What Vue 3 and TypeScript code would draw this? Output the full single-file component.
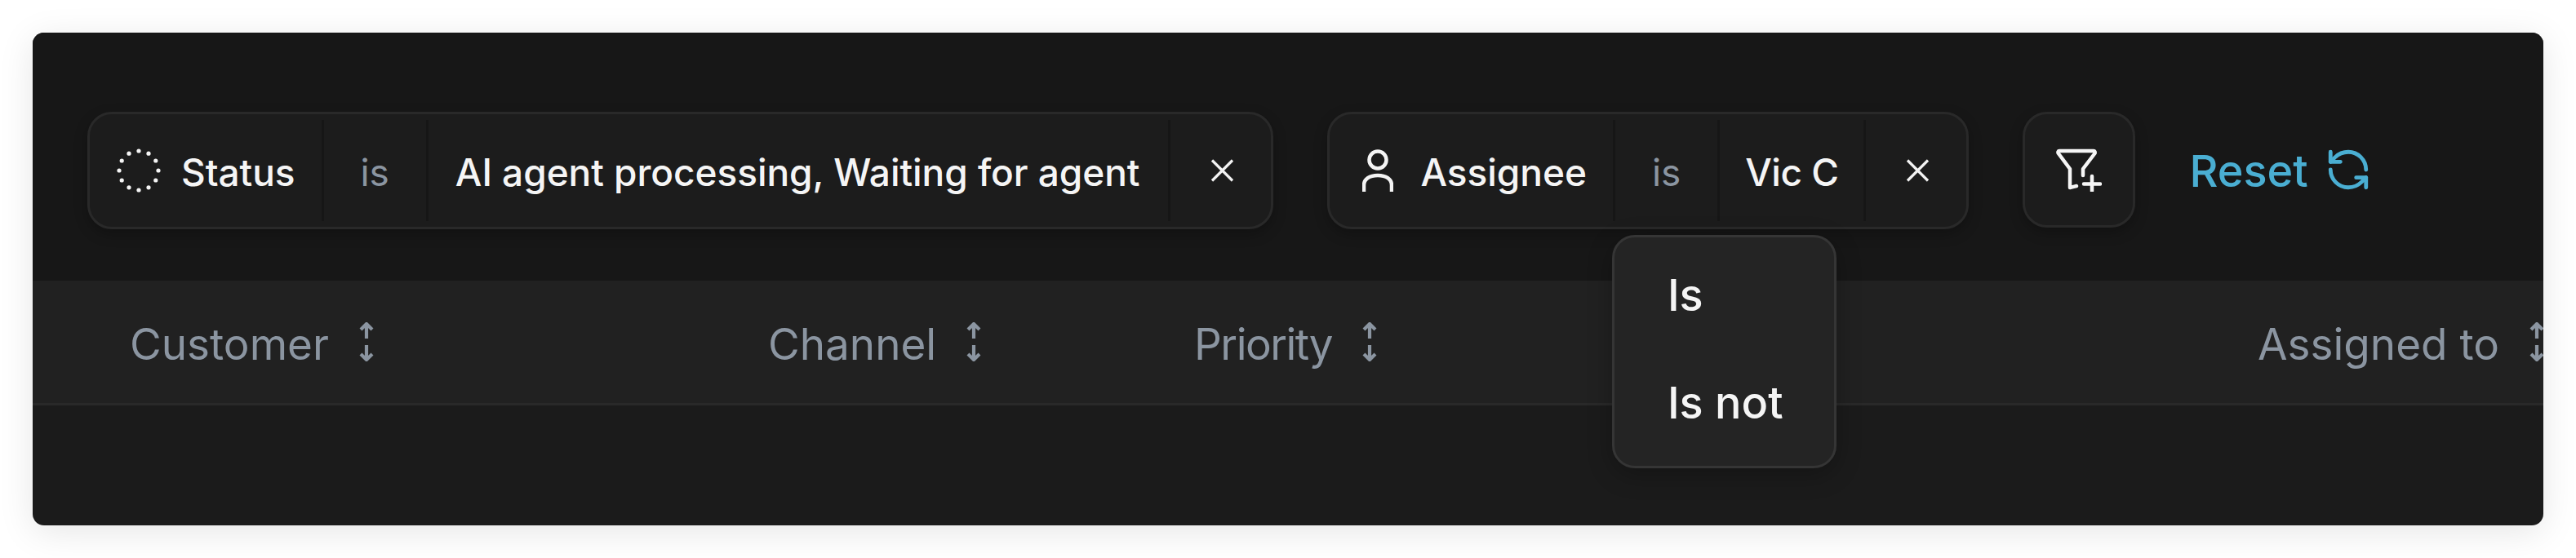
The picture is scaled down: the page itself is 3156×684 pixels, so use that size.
<script setup lang="ts">
const dots = Array.from({ length: 12 }, (_, i) => {
  const a = (i * Math.PI) / 6
  return { cx: 27 + 24 * Math.cos(a), cy: 27 + 24 * Math.sin(a) }
})
const columns = [
  { label: 'Customer', width: 782, tight: false },
  { label: 'Channel', width: 522, tight: false },
  { label: 'Priority', width: 1303, tight: true },
  { label: 'Assigned to', width: 400, tight: false },
]
</script>

<template>
  <div class="page">
    <div class="window">
      <div class="filters">
        <div class="chip">
          <div class="seg field status">
            <svg width="54" height="54" viewBox="0 0 54 54">
              <circle v-for="(d, i) in dots" :key="i" :cx="d.cx" :cy="d.cy" r="2.6" fill="#f4f4f4" />
            </svg>
            <span>Status</span>
          </div>
          <div class="seg op">is</div>
          <div class="seg value">AI agent processing, Waiting for agent</div>
          <div class="seg close">
            <svg width="29" height="28" viewBox="0 0 29 28"><path d="M2 1.5 27 26.5M27 1.5 2 26.5" stroke="#f2f2f2" stroke-width="3.2" fill="none" /></svg>
          </div>
        </div>

        <div class="chip">
          <div class="seg field assignee">
            <svg width="38" height="52" viewBox="0 0 38 52" fill="none" stroke="#f4f4f4" stroke-width="4.500">
              <circle cx="19" cy="13" r="10.500" />
              <path d="M2 52V44C2 36.500 9 32 19 32S36 36.500 36 44V52" />
            </svg>
            <span>Assignee</span>
          </div>
          <div class="seg op anchor">
            is
            <div class="menu">
              <div class="item">Is</div>
              <div class="item">Is not</div>
            </div>
          </div>
          <div class="seg value short">Vic C</div>
          <div class="seg close">
            <svg width="29" height="28" viewBox="0 0 29 28"><path d="M2 1.5 27 26.5M27 1.5 2 26.5" stroke="#f2f2f2" stroke-width="3.2" fill="none" /></svg>
          </div>
        </div>

        <button class="add">
          <svg width="56" height="53" viewBox="0 0 56 53" fill="none" stroke="#f6f6f6" stroke-width="4.500" stroke-linejoin="round" stroke-linecap="round">
            <path d="M4 3H46C47.500 3 48 4.500 47.500 6L33 25V33M4 3C2.500 3 2 4.500 2.800 6L17 25V48L25 46" />
            <path d="M34 43.500H54M44 34V52" />
          </svg>
        </button>

        <button class="reset">
          <span>Reset</span>
          <svg width="58" height="58" viewBox="0 0 24 24" fill="none" stroke="#4aaed2" stroke-width="2" stroke-linecap="round" stroke-linejoin="round">
            <path d="M21 12a9 9 0 0 0-9-9 9.750 9.750 0 0 0-6.740 2.740L3 8" />
            <path d="M3 3v5h5" />
            <path d="M3 12a9 9 0 0 0 9 9 9.750 9.750 0 0 0 6.740-2.740L21 16" />
            <path d="M16 16h5v5" />
          </svg>
        </button>
      </div>

      <div class="thead">
        <div v-for="c in columns" :key="c.label" class="th" :style="{ width: c.width + 'px' }">
          <span class="label" :class="{ tight: c.tight }">{{ c.label }}</span>
          <svg width="20" height="48" viewBox="0 0 20 48" fill="none" stroke="#8b95a1" stroke-width="4.200">
            <path d="M10 2V20M3 9 10 2 17 9" />
            <path d="M10 28V46M3 39 10 46 17 39" />
          </svg>
        </div>
      </div>
    </div>
  </div>
</template>

<style scoped>
.page {
  padding: 40px;
  width: 3156px;
  height: 684px;
  box-sizing: border-box;
  background: #ffffff;
  font-family: Inter, "Liberation Sans", sans-serif;
}
.window {
  width: 3076px;
  height: 604px;
  border-radius: 14px;
  background: #1b1b1b;
  overflow: hidden;
  box-shadow: 0 8px 44px rgba(0, 0, 0, 0.1);
}
.filters {
  height: 304px;
  box-sizing: border-box;
  background: #171717;
  padding: 97px 0 0 67px;
  display: flex;
  align-items: flex-start;
  gap: 66px;
}
.chip {
  height: 144px;
  box-sizing: border-box;
  background: #1c1c1c;
  border: 3px solid #292929;
  border-radius: 30px;
  padding: 7px 0;
  display: flex;
  box-shadow: 0 6px 16px rgba(0, 0, 0, 0.25);
}
.seg {
  display: flex;
  align-items: center;
  font-size: 46px;
  font-weight: 500;
  color: #f5f5f5;
  white-space: nowrap;
  border-left: 3px solid #161616;
  padding: 3px 35px 0 33px;
  letter-spacing: -0.05px;
}
.field {
  border-left: none;
  padding-right: 32px;
}
.field svg {
  margin-top: -3px;
}
.status {
  gap: 25px;
  padding-left: 33px;
}
.assignee {
  gap: 33px;
  padding-left: 40px;
}
.op {
  color: #8b95a1;
  font-weight: 400;
  padding: 3px 45px 0;
}
.short {
  padding: 3px 31px 0;
  letter-spacing: -0.5px;
}
.close {
  padding: 0 45px 0 49px;
}
.anchor {
  position: relative;
}
.menu {
  position: absolute;
  left: -4px;
  top: 141px;
  width: 275px;
  height: 286px;
  box-sizing: border-box;
  border: 3px solid #353535;
  border-radius: 28px;
  background: #242424;
  padding: 4px 0;
  z-index: 2;
  box-shadow: 0 8px 30px rgba(0, 0, 0, 0.25);
}
.item {
  height: 132px;
  display: flex;
  align-items: center;
  padding-left: 65px;
  font-size: 54px;
  font-weight: 500;
  color: #f5f5f5;
  letter-spacing: 0;
}
.add {
  width: 138px;
  height: 142px;
  padding: 0;
  box-sizing: border-box;
  background: #1c1c1c;
  border: 3px solid #292929;
  border-radius: 30px;
  display: flex;
  align-items: center;
  justify-content: center;
  box-shadow: 0 6px 16px rgba(0, 0, 0, 0.25);
}
.reset {
  background: none;
  border: none;
  padding: 2px 0 0;
  height: 142px;
  display: flex;
  align-items: center;
  gap: 20px;
  font-family: inherit;
  font-size: 54px;
  font-weight: 500;
  color: #4aaed2;
}
.reset svg {
  margin-top: -2px;
}
.thead {
  height: 153px;
  box-sizing: border-box;
  background: #212121;
  border-bottom: 3px solid #292929;
  padding-left: 119px;
  display: flex;
  align-items: center;
}
.th {
  flex: none;
  display: flex;
  align-items: center;
  gap: 36px;
  font-size: 53px;
  font-weight: 400;
  color: #8b95a1;
  white-space: nowrap;
}
.label {
  padding-top: 6px;
}
.tight {
  letter-spacing: -1.5px;
}
</style>
